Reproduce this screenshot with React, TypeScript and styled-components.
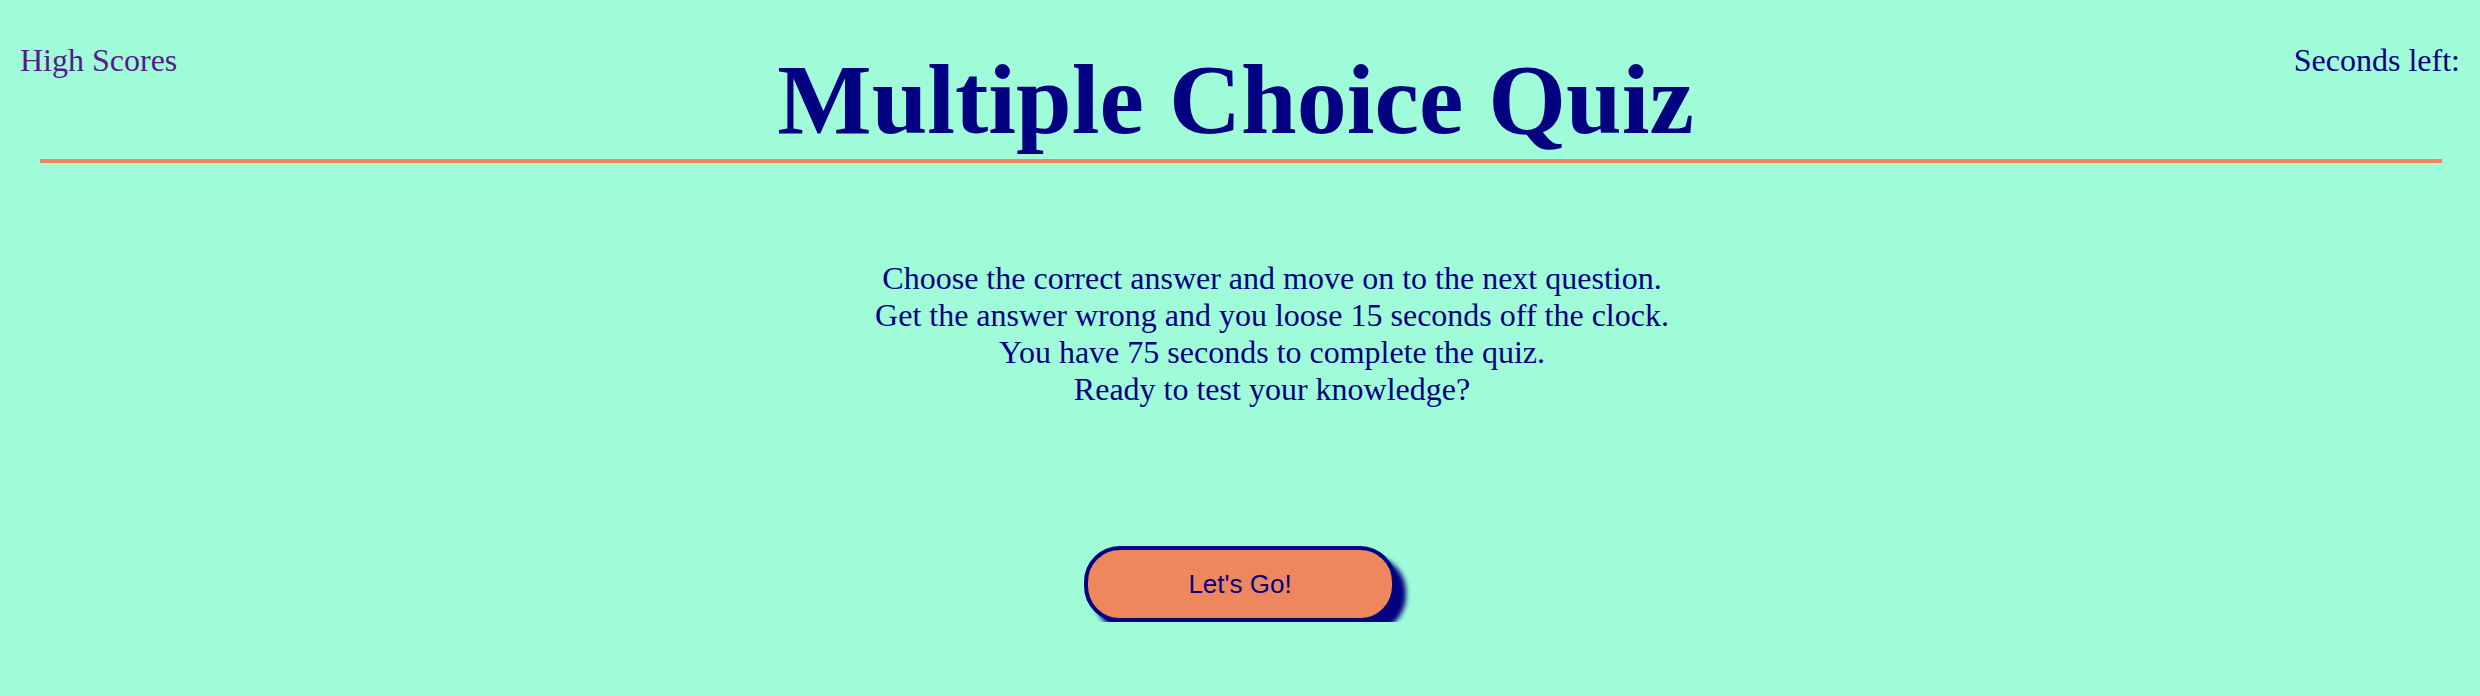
import React from 'react'
import styled, {createGlobalStyle} from 'styled-components'

const GlobalStyle = createGlobalStyle`
  html, body {
    margin: 0;
    padding: 0;
    background: #a0fbd8;
  }
  body {
    font-family: "Liberation Serif", "Times New Roman", serif;
    color: #000080;
  }
`

const Header = styled.header`
  display: flex;
  justify-content: space-between;
  align-items: flex-start;
  padding: 42px 20px 0;
`

const ScoresLink = styled.a`
  font-size: 32px;
  color: #551a8b;
  text-decoration: none;
  cursor: pointer;
`

const Title = styled.h1`
  margin: 0;
  font-size: 100px;
  font-weight: 700;
  color: #000080;
`

const Timer = styled.span`
  font-size: 32px;
  color: #000080;
`

const Divider = styled.div`
  height: 4px;
  margin: 2px 38px 0 40px;
  background: #ef875e;
`

const Intro = styled.section`
  margin: 97px 0 0 64px;
  text-align: center;
  font-size: 32px;
  color: #000080;

  p {
    margin: 0;
  }
`

const Actions = styled.div`
  display: flex;
  justify-content: center;
  margin-top: 138px;
`

const StartButton = styled.button`
  box-sizing: border-box;
  width: 312px;
  height: 76px;
  border: 4px solid #000080;
  border-radius: 36px;
  background: #ef875e;
  color: #000080;
  font-family: "Liberation Sans", Arial, sans-serif;
  font-size: 26px;
  box-shadow: 10px 10px 5px #000080;
  cursor: pointer;
`

const lines = [
  'Choose the correct answer and move on to the next question.',
  'Get the answer wrong and you loose 15 seconds off the clock.',
  'You have 75 seconds to complete the quiz.',
  'Ready to test your knowledge?',
]

const App: React.FC = () => {
  return (
    <>
      <GlobalStyle />
      <Header>
        <ScoresLink href="#">High Scores</ScoresLink>
        <Title>Multiple Choice Quiz</Title>
        <Timer>Seconds left:</Timer>
      </Header>
      <Divider />
      <Intro>
        {lines.map(line => (
          <p key={line}>{line}</p>
        ))}
      </Intro>
      <Actions>
        <StartButton>Let's Go!</StartButton>
      </Actions>
    </>
  )
}

export default App
